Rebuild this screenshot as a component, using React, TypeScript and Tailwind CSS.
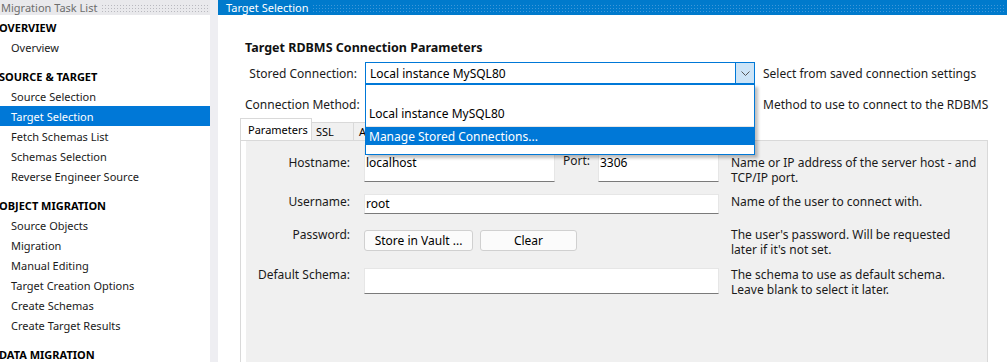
import React from "react";

const F = { fontFamily: '"Noto Sans", "Open Sans", sans-serif' };

function Section({ title, first }: { title: string; first?: boolean }) {
  return (
    <div className={`h-[20px] flex items-center -ml-[1px] font-bold text-[11px] text-black whitespace-nowrap ${first ? "" : "mt-[9px]"}`}>
      {title}
    </div>
  );
}

function Item({ label, selected }: { label: string; selected?: boolean }) {
  return (
    <div
      className={`h-[20px] flex items-center pl-[11px] text-[11px] whitespace-nowrap ${
        selected ? "bg-[#0078d7] text-white" : "text-[#1a1a1a]"
      }`}
    >
      {label}
    </div>
  );
}

function Input({ className, text }: { className: string; text?: string }) {
  return (
    <div className={`bg-white border border-[#e6e6e6] border-b-[#7a7a7a] text-[12px] text-black pl-[1px] whitespace-nowrap ${className}`}>
      {text}
    </div>
  );
}

export default function App() {
  return (
    <div className="w-[1007px] h-[362px] flex overflow-hidden bg-white text-[12px] leading-[15px]" style={F}>
      {/* Left panel */}
      <div className="w-[210px] shrink-0 flex flex-col">
        <div className="h-[16px] bg-[#e9e9ec] flex items-center pr-[2px]">
          <span className="text-[#6d6d6d] text-[11px] pl-[1px] pr-[4px] whitespace-nowrap">Migration Task List</span>
          <div className="flex-1 h-[8px] bg-[radial-gradient(circle,#b9b9bf_0.6px,transparent_0.8px)] bg-[length:3px_3px]" />
        </div>
        <div className="pt-[2px] flex flex-col">
          <Section title="OVERVIEW" first />
          <Item label="Overview" />
          <Section title="SOURCE & TARGET" />
          <Item label="Source Selection" />
          <Item label="Target Selection" selected />
          <Item label="Fetch Schemas List" />
          <Item label="Schemas Selection" />
          <Item label="Reverse Engineer Source" />
          <Section title="OBJECT MIGRATION" />
          <Item label="Source Objects" />
          <Item label="Migration" />
          <Item label="Manual Editing" />
          <Item label="Target Creation Options" />
          <Item label="Create Schemas" />
          <Item label="Create Target Results" />
          <Section title="DATA MIGRATION" />
        </div>
      </div>

      {/* Separator */}
      <div className="w-[8px] shrink-0 bg-[#eeeef2]" />

      {/* Right panel */}
      <div className="flex-1 flex flex-col min-w-0">
        <div className="h-[16px] bg-[#007acc] flex items-center pr-[2px]">
          <span className="text-white text-[11px] pl-[8px] pr-[4px] whitespace-nowrap">Target Selection</span>
          <div className="flex-1 h-[8px] bg-[radial-gradient(circle,#3f97d8_0.6px,transparent_0.8px)] bg-[length:3px_3px]" />
        </div>

        <div className="relative flex-1 pl-[27px]">
          <div className="mt-[24px] font-bold text-[12.5px] leading-[17px] text-[#111] whitespace-nowrap">Target RDBMS Connection Parameters</div>

          {/* Stored connection row */}
          <div className="mt-[6px] flex items-center h-[22px]">
            <div className="w-[112px] text-right text-[#1a1a1a] whitespace-nowrap">Stored Connection:</div>
            <div className="ml-[8px] w-[390px] h-[22px] border border-[#0078d7] bg-white flex">
              <div className="flex-1 pl-[4px] flex items-center text-black whitespace-nowrap">Local instance MySQL80</div>
              <div className="w-[19px] bg-[#cce4f7] border-l border-[#0078d7] flex items-center justify-center">
                <svg width="9" height="5" viewBox="0 0 9 5" fill="none">
                  <path d="M0.5 0.5 L4.5 4.5 L8.5 0.5" stroke="#555" strokeWidth="1" />
                </svg>
              </div>
            </div>
            <div className="ml-[8px] text-[#1a1a1a] whitespace-nowrap">Select from saved connection settings</div>
          </div>

          {/* Connection method row */}
          <div className="mt-[9px] flex items-center h-[22px]">
            <div className="w-[112px] text-right text-[#1a1a1a] whitespace-nowrap">Connection Method:</div>
            <div className="ml-[8px] w-[390px] h-[22px] border border-[#adadad] bg-[#e1e1e1]" />
            <div className="ml-[8px] text-[#1a1a1a] whitespace-nowrap">Method to use to connect to the RDBMS</div>
          </div>

          {/* Tabs */}
          <div className="mt-[3px] flex items-end h-[22px] -ml-[5px] text-[11px]">
            <div className="h-[22px] w-[72px] bg-white border border-b-0 border-[#d9d9d9] flex items-center pl-[7px] text-black relative z-10 whitespace-nowrap">Parameters</div>
            <div className="h-[18px] w-[42px] bg-[#f0f0f0] border border-l-0 border-b-0 border-[#d9d9d9] flex items-center pl-[4px] text-black">SSL</div>
            <div className="h-[18px] w-[80px] bg-[#f0f0f0] border border-l-0 border-b-0 border-[#d9d9d9] flex items-center pl-[5px] text-black">Advanced</div>
          </div>

          {/* Tab panel */}
          <div className="w-[748px] h-[240px] -ml-[5px] pl-[5px] border border-[#d9d9d9] bg-white">
            <div className="w-full h-full bg-[#f0f0f0] pt-[4px]">
              {/* Hostname row */}
              <div className="flex items-start h-[37px]">
                <div className="w-[104px] text-right pt-[10px] text-[#1a1a1a]">Hostname:</div>
                <Input className="ml-[14px] w-[191px] h-[37px] pt-[9px]" text="localhost" />
                <div className="ml-[8px] w-[35px] pt-[8px] text-[#1a1a1a]">Port:</div>
                <Input className="w-[121px] h-[37px] pt-[9px]" text="3306" />
                <div className="ml-[12px] pt-[10px] text-[#1a1a1a] whitespace-nowrap">
                  Name or IP address of the server host - and<br />TCP/IP port.
                </div>
              </div>
              {/* Username */}
              <div className="flex items-start h-[20px] mt-[12px]">
                <div className="w-[104px] text-right text-[#1a1a1a]">Username:</div>
                <Input className="ml-[14px] w-[355px] h-[20px] pt-[1px]" text="root" />
                <div className="ml-[12px] text-[#1a1a1a] whitespace-nowrap">Name of the user to connect with.</div>
              </div>
              {/* Password */}
              <div className="flex items-start h-[21px] mt-[16px]">
                <div className="w-[104px] text-right -mt-[3px] text-[#1a1a1a]">Password:</div>
                <div className="ml-[14px] w-[355px] flex gap-[7px]">
                  <div className="w-[109px] h-[21px] rounded-[3px] border border-[#d0d0d0] bg-[#fbfbfb] flex items-center justify-center text-black whitespace-nowrap">Store in Vault ...</div>
                  <div className="w-[97px] h-[21px] rounded-[3px] border border-[#d0d0d0] bg-[#fbfbfb] flex items-center justify-center text-black">Clear</div>
                </div>
                <div className="ml-[12px] -mt-[3px] text-[#1a1a1a] whitespace-nowrap">
                  The user's password. Will be requested<br />later if it's not set.
                </div>
              </div>
              {/* Default schema */}
              <div className="flex items-start h-[26px] mt-[17px]">
                <div className="w-[104px] text-right -mt-[1px] text-[#1a1a1a] whitespace-nowrap">Default Schema:</div>
                <Input className="ml-[14px] w-[355px] h-[26px]" />
                <div className="ml-[12px] -mt-[1px] text-[#1a1a1a] whitespace-nowrap">
                  The schema to use as default schema.<br />Leave blank to select it later.
                </div>
              </div>
            </div>
          </div>

          {/* Dropdown list overlay */}
          <div className="absolute left-[147px] top-[69px] w-[390px] h-[71px] bg-white border border-[#0078d7] shadow-[3px_3px_3px_rgba(0,0,0,0.25)] z-20 flex flex-col">
            <div className="h-[19px] shrink-0" />
            <div className="h-[19px] shrink-0 flex items-center pl-[3px] text-black whitespace-nowrap">Local instance MySQL80</div>
            <div className="h-[4px] shrink-0 border-b border-[#e6e6e6]" />
            <div className="h-[18px] shrink-0 flex items-center pl-[3px] bg-[#0078d7] text-white whitespace-nowrap">Manage Stored Connections...</div>
            <div className="flex-1" />
          </div>
        </div>
      </div>
    </div>
  );
}
